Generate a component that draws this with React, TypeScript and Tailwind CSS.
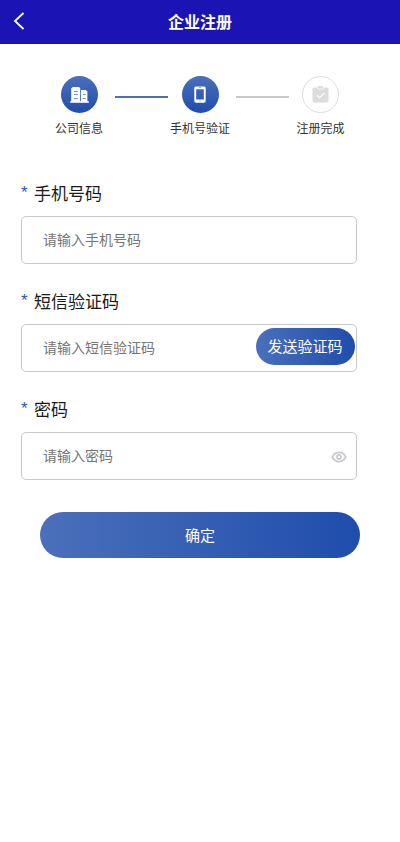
import { useState } from "react";

const fields = [
  { name: "phone", label: "手机号码", placeholder: "请输入手机号码" },
  { name: "code", label: "短信验证码", placeholder: "请输入短信验证码" },
  { name: "password", label: "密码", placeholder: "请输入密码" },
];

function BuildingIcon() {
  return (
    <svg width="19" height="18" viewBox="0 0 19 18" fill="none">
      <path
        d="M1.2 2.2 3 1h6l1.2 1.2V16h-9zM11 4h4.8l1.6 1.4V16H11z"
        fill="#fff"
      />
      <path d="M.2 15.2h18.6v1.6H.2z" fill="#fff" />
      <path
        d="M4 5.5h3.6M4 8.5h3.6M4 12.5h3.6M13 8.5h2.6M13 12.5h2.6"
        stroke="#6d8fd0"
      />
    </svg>
  );
}

function PhoneIcon() {
  return (
    <svg className="mr-px" width="12" height="17" viewBox="0 0 12 17">
      <path
        fillRule="evenodd"
        fill="#fff"
        d="M2 .4h8A1.7 1.7 0 0 1 11.7 2v13a1.7 1.7 0 0 1-1.7 1.7H2A1.7 1.7 0 0 1 .3 15V2A1.7 1.7 0 0 1 2 .4zM2.2 3.2v10.2h7.6V3.2zM4.8 1.6v.4h2.4v-.4zM5.5 14.7v.7h1v-.7z"
      />
    </svg>
  );
}

function ClipboardIcon() {
  return (
    <svg width="17" height="17" viewBox="0 0 17 17" fill="none">
      <path
        d="M2 1.5h2.7c.3 1.3 1 2 2.1 2h3.4c1.1 0 1.8-.7 2.1-2H15A1.5 1.5 0 0 1 16.5 3v12a1.5 1.5 0 0 1-1.5 1.5H2A1.5 1.5 0 0 1 .5 15V3A1.5 1.5 0 0 1 2 1.5z"
        fill="#dcdcdc"
      />
      <rect x="5.6" y=".3" width="5.8" height="2.4" rx="1" fill="#dcdcdc" />
      <path d="m5 9.2 2.6 2.5 4.9-4.8" stroke="#fff" strokeWidth="1.2" />
    </svg>
  );
}

function EyeIcon() {
  return (
    <svg width="16" height="12" viewBox="0 0 16 12" fill="none" stroke="#c8c9cc">
      <path
        d="M1.2 6C2.8 3 5.2 1.4 8 1.4S13.2 3 14.8 6C13.2 9 10.8 10.6 8 10.6S2.8 9 1.2 6z"
        strokeWidth="1.6"
      />
      <circle cx="8" cy="6" r="2.1" strokeWidth="1.6" />
    </svg>
  );
}

function Steps() {
  return (
    <div className="flex pl-[44px] pt-8 text-xs leading-[18px] text-[#333]">
      <div className="flex w-[71px] flex-col items-center">
        <div className="grid h-[37px] w-[37px] place-items-center rounded-full bg-linear-to-b from-[#4b70ba] to-[#1f4dac]">
          <BuildingIcon />
        </div>
        <span className="mt-1.5 mr-px whitespace-nowrap">公司信息</span>
      </div>
      <div className="mt-5 h-0.5 w-[53px] bg-[#4b70ba]" />
      <div className="mr-[3px] flex w-[65px] flex-col items-center">
        <div className="grid h-[37px] w-[37px] place-items-center rounded-full bg-linear-to-b from-[#4b70ba] to-[#1f4dac]">
          <PhoneIcon />
        </div>
        <span className="mt-1.5 mr-px whitespace-nowrap">手机号验证</span>
      </div>
      <div className="mt-5 h-0.5 w-[53px] bg-[#c9c9c9]" />
      <div className="flex w-[63px] flex-col items-center">
        <div className="grid h-[37px] w-[37px] place-items-center rounded-full border border-[#dcdcdc]">
          <ClipboardIcon />
        </div>
        <span className="mt-1.5 whitespace-nowrap">注册完成</span>
      </div>
    </div>
  );
}

function App() {
  const [values, setValues] = useState<Record<string, string>>({});
  const [visible, setVisible] = useState(false);

  return (
    <div className="min-h-screen bg-white font-['Noto_Sans_CJK_SC',sans-serif]">
      <header className="flex h-11 items-center bg-[#1c13b4] text-white">
        <button className="w-10 pl-[13px] pb-[3px]">
          <svg width="12" height="18" viewBox="0 0 12 18" fill="none">
            <path d="M10.5 1 2 9l8.5 8" stroke="#fff" strokeWidth="1.8" />
          </svg>
        </button>
        <h1 className="mr-10 flex-1 pb-0.5 text-center text-base font-bold">
          企业注册
        </h1>
      </header>

      <Steps />

      <form
        className="flex flex-col gap-6 pl-[21px] pt-[43px]"
        onSubmit={(e) => e.preventDefault()}
      >
        {fields.map((field) => (
          <div key={field.name} className="w-[336px]">
            <label
              htmlFor={field.name}
              className="flex h-9 pt-px text-[17px] leading-6 text-[#1a1a1a]"
            >
              <span className="w-[13px] font-['Liberation_Sans',sans-serif] text-[17px] leading-6 text-[#2b57b0]">
                *
              </span>
              {field.label}
            </label>
            <div className="flex h-12 items-center rounded-[5px] border border-[#c8c9cc] pl-[21px] pr-px">
              <input
                id={field.name}
                type={field.name === "password" && !visible ? "password" : "text"}
                value={values[field.name] || ""}
                onChange={(e) =>
                  setValues({ ...values, [field.name]: e.target.value })
                }
                placeholder={field.placeholder}
                className="min-w-0 flex-1 pb-0.5 text-sm outline-none placeholder:text-[#757575]"
              />
              {field.name === "code" && (
                <button
                  type="button"
                  className="mb-[3px] h-[37px] w-[99px] rounded-full bg-linear-to-r from-[#4b70ba] to-[#1f4dac] pr-px pb-px text-[15px] text-white"
                >
                  发送验证码
                </button>
              )}
              {field.name === "password" && (
                <button
                  type="button"
                  className="mr-2 mt-px"
                  onClick={() => setVisible(!visible)}
                >
                  <EyeIcon />
                </button>
              )}
            </div>
          </div>
        ))}
        <button className="ml-[19px] mt-2 h-[46px] w-80 rounded-full bg-linear-to-r from-[#4b70ba] to-[#1f4dac] text-[15px] text-white">
          确定
        </button>
      </form>
    </div>
  );
}

export default App;
